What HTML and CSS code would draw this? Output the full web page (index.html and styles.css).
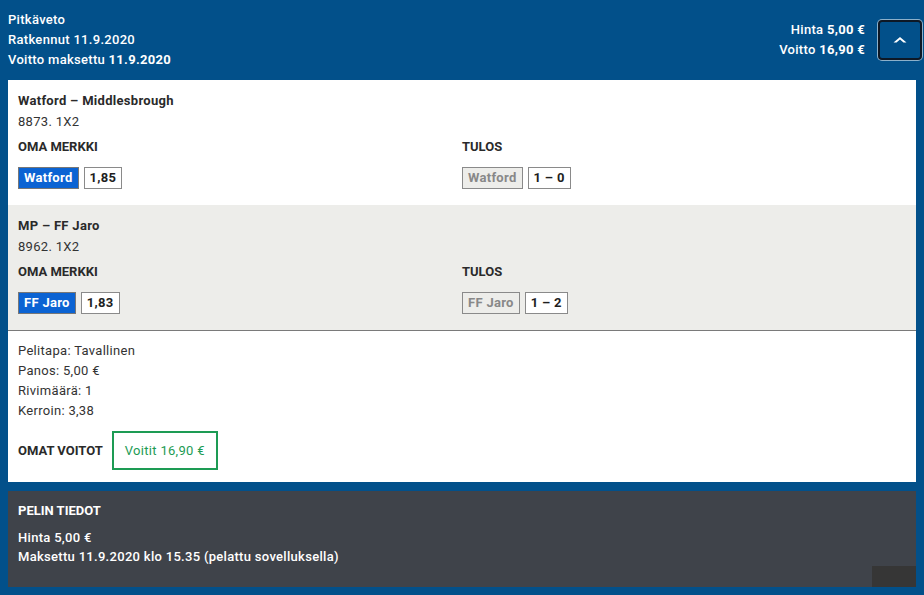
FILE: index.html
```html
<!DOCTYPE html>
<html lang="fi">
<head>
<meta charset="utf-8">
<title>Pitkäveto</title>
<link rel="stylesheet" href="styles.css">
</head>
<body>
<div class="page">
  <header class="header">
    <div class="header-info">
      <div>Pitkäveto</div>
      <div>Ratkennut 11.9.2020</div>
      <div>Voitto maksettu <b>11.9.2020</b></div>
    </div>
    <div class="header-side">
      <div class="header-sums">
        <div>Hinta <b>5,00 €</b></div>
        <div>Voitto <b>16,90 €</b></div>
      </div>
      <button class="toggle" type="button" aria-label="Sulje">
        <svg width="14" height="8" viewBox="0 0 14 8"><path d="M7 1 L13.5 6.5 L10.5 6.5 L7 3.6 L3.5 6.5 L0.5 6.5 Z" fill="#fff"/></svg>
      </button>
    </div>
  </header>

  <section class="card">
    <div class="match">
      <div class="match-title">Watford – Middlesbrough</div>
      <div class="match-code">8873. 1X2</div>
      <div class="match-grid">
        <div>
          <div class="label">OMA MERKKI</div>
          <div class="chips">
            <span class="chip chip-pick">Watford</span>
            <span class="chip">1,85</span>
          </div>
        </div>
        <div>
          <div class="label">TULOS</div>
          <div class="chips">
            <span class="chip chip-muted">Watford</span>
            <span class="chip">1 – 0</span>
          </div>
        </div>
      </div>
    </div>
    <div class="match match-alt">
      <div class="match-title">MP – FF Jaro</div>
      <div class="match-code">8962. 1X2</div>
      <div class="match-grid">
        <div>
          <div class="label">OMA MERKKI</div>
          <div class="chips">
            <span class="chip chip-pick">FF Jaro</span>
            <span class="chip">1,83</span>
          </div>
        </div>
        <div>
          <div class="label">TULOS</div>
          <div class="chips">
            <span class="chip chip-muted">FF Jaro</span>
            <span class="chip">1 – 2</span>
          </div>
        </div>
      </div>
    </div>
    <div class="details">
      <div>Pelitapa: Tavallinen</div>
      <div>Panos: 5,00 €</div>
      <div>Rivimäärä: 1</div>
      <div>Kerroin: 3,38</div>
      <div class="wins">
        <span class="label">OMAT VOITOT</span>
        <span class="win-box">Voitit 16,90 €</span>
      </div>
    </div>
  </section>

  <section class="game-info">
    <div class="game-title">PELIN TIEDOT</div>
    <div class="game-line">Hinta 5,00 €</div>
    <div class="game-line">Maksettu 11.9.2020 klo 15.35 (pelattu sovelluksella)</div>
    <div class="corner"></div>
  </section>
</div>
</body>
</html>
```

FILE: styles.css
```css
* { box-sizing: border-box; }
html, body { margin: 0; padding: 0; }
body {
  background: #02508a;
  font-family: Roboto, "Liberation Sans", Arial, sans-serif;
  font-size: 13px;
  line-height: 20px;
  letter-spacing: 0.3px;
  color: #2a2a2a;
}
.page {
  display: flex;
  flex-direction: column;
  height: 595px;
}
.header {
  display: flex;
  justify-content: space-between;
  align-items: stretch;
  height: 80px;
  padding: 0 2px 0 8px;
  color: #fff;
  font-weight: 500;
}
.header b { font-weight: 700; }
.header-info { padding-top: 10px; }
.header-side {
  display: flex;
  align-items: center;
  gap: 13px;
}
.header-sums { text-align: right; }
.toggle {
  width: 44px;
  height: 40px;
  margin: 0;
  padding: 0;
  background: #02508a;
  border: 2px solid #0d1826;
  border-radius: 4px;
  box-shadow: 0 0 0 1px rgba(255,255,255,0.55);
  display: flex;
  align-items: center;
  justify-content: center;
}
.card {
  margin: 0 8px;
  background: #fff;
}
.match {
  padding: 11px 10px 16px;
}
.match-alt {
  background: #ededea;
  border-bottom: 1px solid #7a7a7a;
}
.match-title { font-weight: 700; color: #2a2a2a; }
.match-code { margin-top: 1px; color: #333; }
.match-grid {
  display: grid;
  grid-template-columns: 1fr 1fr;
  margin-top: 5px;
}
.label {
  font-weight: 700;
  letter-spacing: 0;
  color: #2a2a2a;
}
.chips {
  display: flex;
  gap: 5px;
  margin-top: 10px;
}
.chip {
  display: inline-flex;
  align-items: center;
  height: 22px;
  padding: 0 5px;
  border: 1px solid #8a8a8a;
  background: #fff;
  font-weight: 700;
  color: #1e1e1e;
}
.chip-pick {
  background: #0b63d3;
  color: #fff;
  border-color: #777;
}
.chip-muted {
  background: #ededea;
  color: #888;
}
.details {
  padding: 10px 10px 12px;
  color: #333;
}
.wins {
  display: flex;
  align-items: center;
  gap: 9px;
  margin-top: 10px;
}
.win-box {
  display: inline-flex;
  align-items: center;
  height: 39px;
  padding: 0 11px;
  border: 2px solid #1d9b54;
  color: #1d9b54;
}
.game-info {
  margin: 9px 8px 0;
  height: 96px;
  background: #3f434a;
  color: #fff;
  padding: 10px 0 0 10px;
  display: flex;
  flex-direction: column;
  font-weight: 500;
}
.game-title { font-weight: 700; letter-spacing: 0; margin-bottom: 7px; }
.game-line { line-height: 19px; }
.corner {
  align-self: flex-end;
  width: 44px;
  height: 21px;
  margin-top: auto;
  background: #363636;
}
```
